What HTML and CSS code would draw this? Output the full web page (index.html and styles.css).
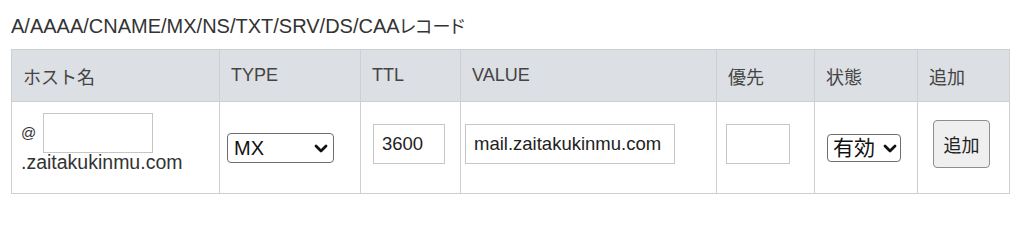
FILE: index.html
```html
<!DOCTYPE html>
<html lang="ja">
<head>
<meta charset="utf-8">
<title>DNSレコード</title>
<link rel="stylesheet" href="styles.css">
</head>
<body>
<div class="page">
  <h2 class="title">A/AAAA/CNAME/MX/NS/TXT/SRV/DS/CAA<span class="jp">レコード</span></h2>
  <table class="records">
    <colgroup>
      <col class="c-host"><col class="c-type"><col class="c-ttl"><col class="c-value"><col class="c-prio"><col class="c-state"><col class="c-add">
    </colgroup>
    <thead>
      <tr>
        <th>ホスト名</th>
        <th>TYPE</th>
        <th>TTL</th>
        <th>VALUE</th>
        <th>優先</th>
        <th>状態</th>
        <th>追加</th>
      </tr>
    </thead>
    <tbody>
      <tr>
        <td class="td-host">
          <div class="host-line"><span class="at">@</span><input class="txt in-host" type="text" value=""></div>
          <div class="domain">.zaitakukinmu.com</div>
        </td>
        <td class="td-type">
          <div class="sel-wrap">
            <select class="sel sel-type"><option>MX</option><option>A</option><option>AAAA</option><option>CNAME</option><option>NS</option><option>TXT</option><option>SRV</option><option>DS</option><option>CAA</option></select>
            <svg class="chev" viewBox="0 0 14 9" width="14" height="9"><polyline points="2,2 7,7 12,2" fill="none" stroke="#111" stroke-width="2.8" stroke-linecap="round" stroke-linejoin="round"/></svg>
          </div>
        </td>
        <td class="td-ttl"><input class="txt in-ttl" type="text" value="3600"></td>
        <td class="td-value"><input class="txt in-value" type="text" value="mail.zaitakukinmu.com"></td>
        <td class="td-prio"><input class="txt in-prio" type="text" value=""></td>
        <td class="td-state">
          <div class="sel-wrap">
            <select class="sel sel-state"><option>有効</option><option>無効</option></select>
            <svg class="chev chev-state" viewBox="0 0 14 9" width="14" height="9"><polyline points="2,2 7,7 12,2" fill="none" stroke="#111" stroke-width="2.8" stroke-linecap="round" stroke-linejoin="round"/></svg>
          </div>
        </td>
        <td class="td-add"><button class="btn-add" type="button">追加</button></td>
      </tr>
    </tbody>
  </table>
</div>
</body>
</html>
```
FILE: styles.css
```css
html, body {
  margin: 0;
  padding: 0;
  background: #fff;
}

body {
  font-family: "Liberation Sans", Arial, "Noto Sans CJK JP", sans-serif;
  color: #333;
}

.page {
  padding: 15px 0 0 11px;
}

.title {
  margin: 0 0 12px 0;
  font-size: 20px;
  font-weight: normal;
  line-height: 22px;
  height: 22px;
  color: #333;
}

.title .jp {
  font-size: 18px;
  font-feature-settings: "palt" 1;
}

.records {
  border-collapse: collapse;
  table-layout: fixed;
  width: 998px;
}

.c-host { width: 208px; }
.c-type { width: 141px; }
.c-ttl { width: 100px; }
.c-value { width: 256px; }
.c-prio { width: 98px; }
.c-state { width: 103px; }
.c-add { width: 92px; }

.records th,
.records td {
  border: 1px solid #cfcfcf;
}

.records th {
  background: #dcdfe3;
  color: #444;
  font-size: 18px;
  font-weight: normal;
  text-align: left;
  height: 52px;
  padding: 0 11px;
  box-sizing: border-box;
}

.records td {
  height: 92px;
  box-sizing: border-box;
  padding: 0;
  vertical-align: middle;
  font-size: 18px;
}

.td-host {
  vertical-align: top !important;
  padding: 11px 9px 0 9px !important;
}

.host-line {
  display: flex;
  align-items: center;
  gap: 7px;
}

.at {
  font-size: 15px;
  color: #333;
  line-height: 16px;
}

.domain {
  margin-top: -2px;
  font-size: 19.5px;
  line-height: 22px;
  color: #333;
}

.txt {
  box-sizing: border-box;
  height: 40px;
  border: 1px solid #c6c6c6;
  border-radius: 0;
  padding: 0 8px;
  font-family: "Liberation Sans", Arial, "Noto Sans CJK JP", sans-serif;
  font-size: 18.5px;
  color: #222;
  background: #fff;
  outline: none;
  margin: 0;
  display: block;
}

.in-host { width: 110px; }
.in-ttl { width: 72px; }
.in-value { width: 210px; }
.in-prio { width: 64px; }

.td-ttl .txt,
.td-value .txt,
.td-prio .txt,
.btn-add {
  margin-bottom: 7px;
}

.td-type { padding-left: 7px !important; }
.td-ttl { padding-left: 12px !important; }
.td-value { padding-left: 4px !important; }
.td-prio { padding-left: 9px !important; }
.td-state { padding-left: 12px !important; }
.td-add { padding-left: 15px !important; }

.sel-wrap {
  position: relative;
  display: inline-block;
  vertical-align: middle;
}

.sel {
  -webkit-appearance: none;
  appearance: none;
  display: block;
  box-sizing: border-box;
  border: 1px solid #6e6e6e;
  border-radius: 4px;
  background: #fff;
  color: #111;
  font-family: "Liberation Sans", Arial, "Noto Sans CJK JP", sans-serif;
  font-size: 20px;
  margin: 0;
  outline: none;
}

.sel-type {
  width: 107px;
  height: 30px;
  padding: 0 0 0 6px;
}

.sel-state {
  width: 74px;
  height: 28px;
  padding: 0 0 0 5px;
  font-size: 21px;
}

.chev {
  position: absolute;
  right: 6px;
  top: 50%;
  margin-top: -4px;
  pointer-events: none;
}

.chev-state {
  right: 4px;
}

.btn-add {
  display: block;
  box-sizing: border-box;
  width: 57px;
  height: 48px;
  padding: 0;
  background: #efefef;
  border: 1px solid #8e8e8e;
  border-radius: 4px;
  color: #222;
  font-family: "Liberation Sans", Arial, "Noto Sans CJK JP", sans-serif;
  font-size: 18px;
}
```
